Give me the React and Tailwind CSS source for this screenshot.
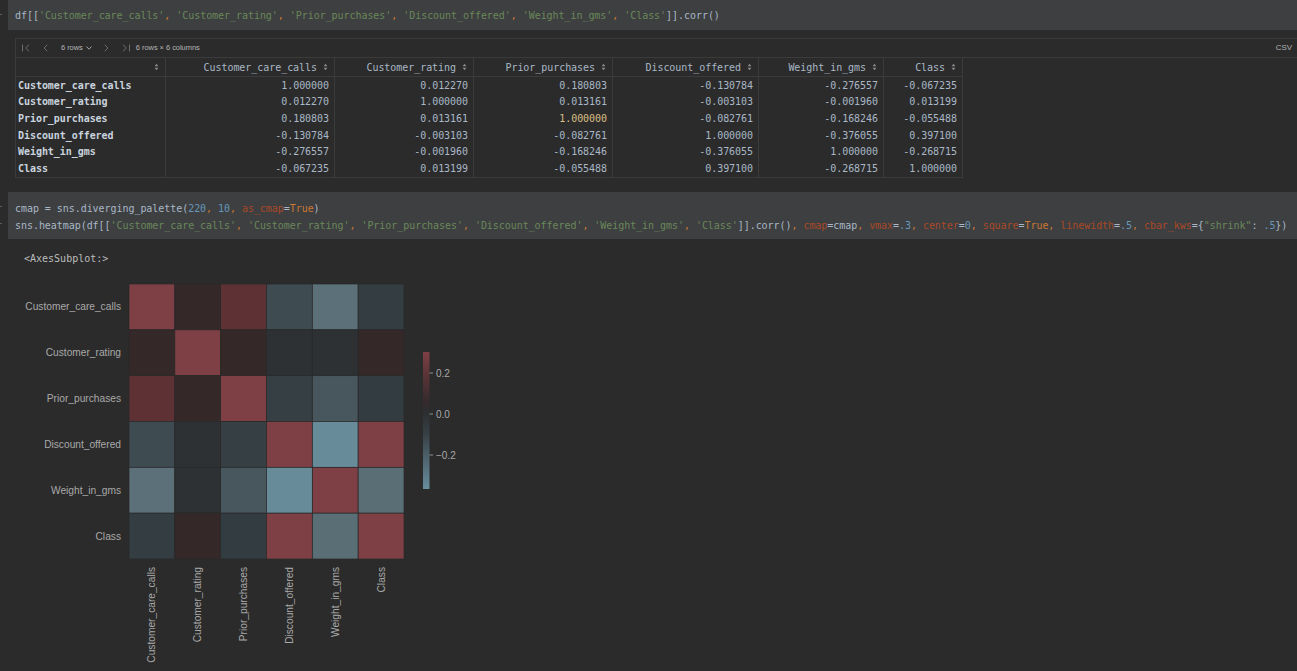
import React from "react";

const COLS = [
  "Customer_care_calls",
  "Customer_rating",
  "Prior_purchases",
  "Discount_offered",
  "Weight_in_gms",
  "Class",
];

const ROWS = [
  ["1.000000", "0.012270", "0.180803", "-0.130784", "-0.276557", "-0.067235"],
  ["0.012270", "1.000000", "0.013161", "-0.003103", "-0.001960", "0.013199"],
  ["0.180803", "0.013161", "1.000000", "-0.082761", "-0.168246", "-0.055488"],
  ["-0.130784", "-0.003103", "-0.082761", "1.000000", "-0.376055", "0.397100"],
  ["-0.276557", "-0.001960", "-0.168246", "-0.376055", "1.000000", "-0.268715"],
  ["-0.067235", "0.013199", "-0.055488", "0.397100", "-0.268715", "1.000000"],
];

// column widths of the dataframe grid
const WIDTHS = ["w-[169px]", "w-[139px]", "w-[139px]", "w-[146px]", "w-[125px]", "w-[79px]"];

/* heatmap cell colours, read off the plot */
const R = "#7e4045";
const HEAT = [
  [R, "#352829", "#5e3235", "#3e4b51", "#5b7079", "#343e42"],
  ["#352829", R, "#352829", "#2d3133", "#2d3133", "#352829"],
  ["#5e3235", "#352829", R, "#363f43", "#48575e", "#333c40"],
  ["#3e4b51", "#2d3133", "#363f43", R, "#678b98", R],
  ["#5b7079", "#2d3133", "#48575e", "#678b98", R, "#5a6e76"],
  ["#343e42", "#352829", "#333c40", R, "#5a6e76", R],
];

const Str = ({ children }) => <span className="text-[#6a8759]">{children}</span>;
const Sep = () => <span className="text-[#cc7832]">, </span>;
const Num = ({ children }) => <span className="text-[#6897bb]">{children}</span>;
const Kw = ({ children }) => <span className="text-[#aa4926]">{children}</span>;
const Kc = ({ children }) => <span className="text-[#cc7832]">{children}</span>;

function ColList() {
  return (
    <>
      [[
      {COLS.map((c, i) => (
        <React.Fragment key={c}>
          <Str>'{c}'</Str>
          {i < COLS.length - 1 && <Sep />}
        </React.Fragment>
      ))}
      ]]
    </>
  );
}

function Gutter({ marks = [] }) {
  return (
    <div className="w-2 relative shrink-0">
      {marks.map((t) => (
        <div key={t} className="absolute left-0 w-[2px] h-px bg-[#5a5a5a]" style={{ top: t }} />
      ))}
    </div>
  );
}

function SortIcon() {
  return (
    <svg width="5" height="8" viewBox="0 0 5 8" className="shrink-0">
      <path d="M0.6 3.2 L2.5 0.8 L4.4 3.2 Z" fill="#8c8c8c" />
      <path d="M0.6 4.8 L2.5 7.2 L4.4 4.8 Z" fill="#8c8c8c" />
    </svg>
  );
}

function Toolbar() {
  const stroke = "#6b6b6b";
  return (
    <div className="h-[19px] border-b border-[#3b3b3b] flex items-center pl-[6px] font-['Liberation_Sans',Arial,sans-serif] text-[7.5px] text-[#b4b4b4]">
      <svg width="8" height="8" viewBox="0 0 8 8">
        <path d="M0.5 0.5 V7.5 M7 0.8 L3.6 4 L7 7.2" stroke={stroke} fill="none" />
      </svg>
      <svg width="5" height="8" viewBox="0 0 5 8" className="ml-[13px]">
        <path d="M4.3 0.8 L1 4 L4.3 7.2" stroke={stroke} fill="none" />
      </svg>
      <span className="ml-[13px]">6 rows</span>
      <svg width="6" height="4" viewBox="0 0 6 4" className="ml-[3px]">
        <path d="M0.5 0.5 L3 3.2 L5.5 0.5" stroke="#a0a0a0" fill="none" />
      </svg>
      <svg width="5" height="8" viewBox="0 0 5 8" className="ml-[12px]">
        <path d="M0.7 0.8 L4 4 L0.7 7.2" stroke={stroke} fill="none" />
      </svg>
      <svg width="8" height="8" viewBox="0 0 8 8" className="ml-[13px]">
        <path d="M1 0.8 L4.4 4 L1 7.2 M7.5 0.5 V7.5" stroke={stroke} fill="none" />
      </svg>
      <span className="ml-[6px]">6 rows × 6 columns</span>
      <span className="ml-auto mr-[5px] text-[8px]">CSV</span>
    </div>
  );
}

function Table() {
  return (
    <div className="ml-[15px] mt-2 w-[1282px] border-l border-t border-[#3b3b3b] font-['DejaVu_Sans_Mono',monospace] text-[10px] tracking-[-0.05px]">
      <Toolbar />
      <div className="flex h-[19px] border-b border-[#3b3b3b] w-[947px] text-[#a9b7c6]">
        <div className="w-[150px] border-r border-[#3b3b3b] flex items-center justify-end pr-[6px]">
          <SortIcon />
        </div>
        {COLS.map((c, i) => (
          <div
            key={c}
            className={`${WIDTHS[i]} border-r border-[#3b3b3b] flex items-center justify-end gap-[6px] pr-[6px]`}
          >
            <span>{c}</span>
            <SortIcon />
          </div>
        ))}
      </div>
      {ROWS.map((r, ri) => (
        <div key={ri} className="flex h-[16.6px] w-[947px]">
          <div className="w-[150px] border-r border-[#3b3b3b] flex items-center pl-[2px] font-bold text-[#c9d3de]">
            {COLS[ri]}
          </div>
          {r.map((v, ci) => (
            <div
              key={ci}
              className={`${WIDTHS[ci]} border-r border-[#3b3b3b] flex items-center justify-end pr-[5px] ${
                ri === 2 && ci === 2 ? "text-[#d9bf85]" : "text-[#a9b7c6]"
              }`}
            >
              {v}
            </div>
          ))}
        </div>
      ))}
      <div className="h-px w-[947px] bg-[#3b3b3b]" />
    </div>
  );
}

function Heatmap() {
  const x0 = 129;
  const y0 = 18;
  const s = 275 / 6;
  const font = "'Liberation Sans', Arial, sans-serif";
  return (
    <svg width="480" height="405" className="block">
      <defs>
        <linearGradient id="cbar" x1="0" y1="0" x2="0" y2="1">
          <stop offset="0" stopColor="#7e4045" />
          <stop offset="0.16" stopColor="#5c3437" />
          <stop offset="0.37" stopColor="#342a2c" />
          <stop offset="0.445" stopColor="#2c2f31" />
          <stop offset="0.6" stopColor="#374045" />
          <stop offset="0.76" stopColor="#4c6069" />
          <stop offset="1" stopColor="#678e9d" />
        </linearGradient>
      </defs>
      {HEAT.map((row, i) =>
        row.map((c, j) => (
          <rect
            key={`${i}-${j}`}
            x={x0 + j * s}
            y={y0 + i * s}
            width={s}
            height={s}
            fill={c}
            stroke="#2a2a2a"
            strokeWidth="0.7"
          />
        ))
      )}
      {COLS.map((c, i) => (
        <text
          key={`y${c}`}
          x="121"
          y={y0 + (i + 0.5) * s}
          textAnchor="end"
          dominantBaseline="central"
          fontFamily={font}
          fontSize="10.2"
          fill="#a9a9a9"
        >
          {c}
        </text>
      ))}
      {COLS.map((c, j) => (
        <text
          key={`x${c}`}
          transform={`translate(${x0 + (j + 0.5) * s} 301) rotate(-90)`}
          textAnchor="end"
          dominantBaseline="central"
          fontFamily={font}
          fontSize="10.2"
          fill="#a9a9a9"
        >
          {c}
        </text>
      ))}
      {/* colour bar */}
      <rect x="423" y="86" width="6.5" height="137" fill="url(#cbar)" />
      {[
        [107, "0.2"],
        [148, "0.0"],
        [189, "\u22120.2"],
      ].map(([y, t]) => (
        <g key={t}>
          <line x1="429.5" x2="433" y1={y} y2={y} stroke="#a9a9a9" strokeWidth="0.8" />
          <text x="436" y={y} dominantBaseline="central" fontFamily={font} fontSize="10" fill="#a9a9a9">
            {t}
          </text>
        </g>
      ))}
    </svg>
  );
}

export default function App() {
  return (
    <div className="w-[1297px] h-[671px] overflow-hidden bg-[#2b2b2b] font-['DejaVu_Sans_Mono',monospace] text-[10px] text-[#a9b7c6]">
      {/* cell 1 */}
      <div className="flex h-[30px]">
        <Gutter marks={[14]} />
        <div className="flex-1 bg-[#3d3f41] pl-[7px] flex items-center whitespace-pre tracking-[-0.05px]">
          df<ColList />.corr()
        </div>
      </div>

      <Table />

      {/* cell 2 */}
      <div className="flex h-[47px] mt-[14px]">
        <Gutter marks={[14, 31]} />
        <div className="flex-1 bg-[#3d3f41] pl-[7px] pt-[8px] leading-[17px] whitespace-pre tracking-[-0.05px]">
          <div>
            cmap = sns.diverging_palette(<Num>220</Num>
            <Sep />
            <Num>10</Num>
            <Sep />
            <Kw>as_cmap</Kw>=<Kc>True</Kc>)
          </div>
          <div>
            sns.heatmap(df<ColList />.corr()
            <Sep />
            <Kw>cmap</Kw>=cmap
            <Sep />
            <Kw>vmax</Kw>=<Num>.3</Num>
            <Sep />
            <Kw>center</Kw>=<Num>0</Num>
            <Sep />
            <Kw>square</Kw>=<Kc>True</Kc>
            <Sep />
            <Kw>linewidth</Kw>=<Num>.5</Num>
            <Sep />
            <Kw>cbar_kws</Kw>={"{"}
            <Str>"shrink"</Str>: <Num>.5</Num>
            {"})"}
          </div>
        </div>
      </div>

      {/* output */}
      <div className="mt-[13px] ml-[24px] h-[14px] leading-[14px] text-[#bdbdbd]">&lt;AxesSubplot:&gt;</div>
      <Heatmap />
    </div>
  );
}
